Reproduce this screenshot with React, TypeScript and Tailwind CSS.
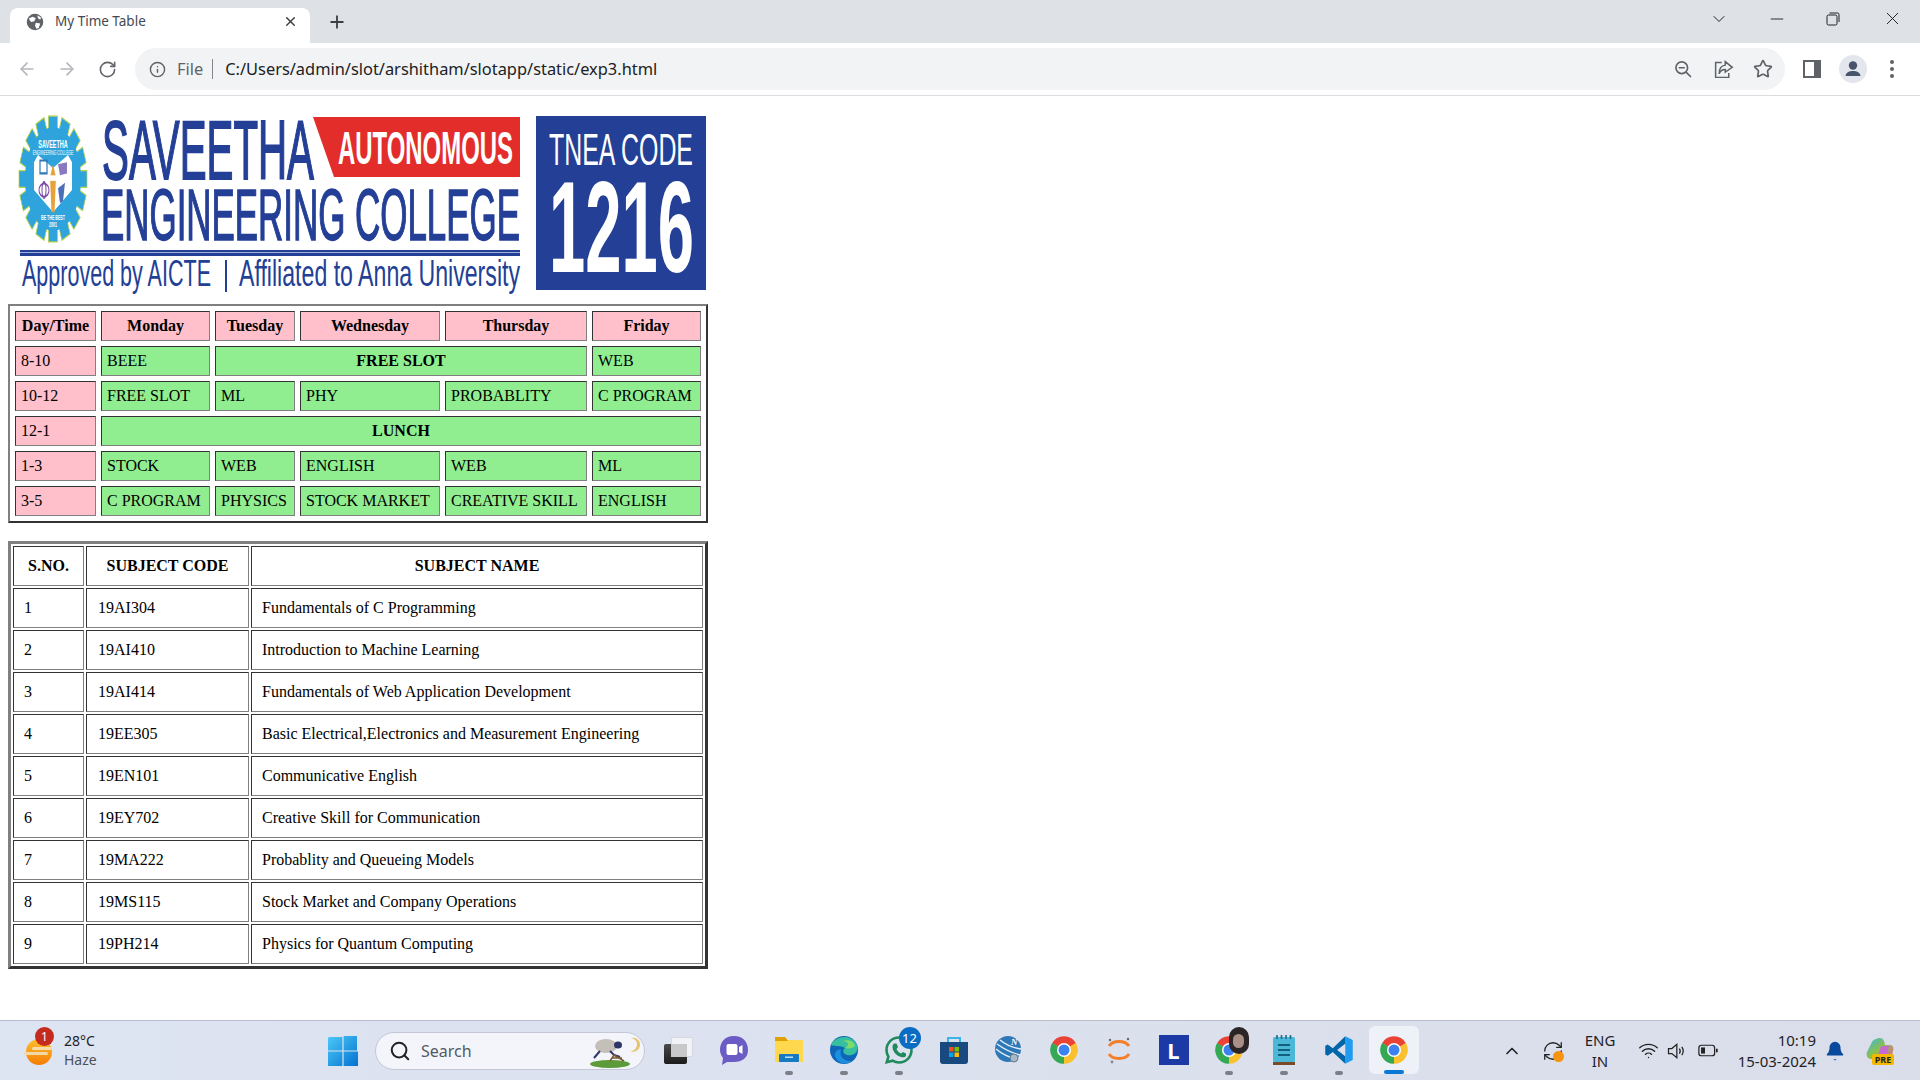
import { ArrowLeft, ArrowRight, RotateCw, Info, Star, X, Plus, ChevronDown, Minus, ChevronUp, Wifi, Search, Bell, RefreshCw } from "lucide-react";

const slotRows = [
  { time: "10-12", cells: ["FREE SLOT", "ML", "PHY", "PROBABLITY", "C PROGRAM"] },
  { time: "1-3", cells: ["STOCK", "WEB", "ENGLISH", "WEB", "ML"] },
  { time: "3-5", cells: ["C PROGRAM", "PHYSICS", "STOCK MARKET", "CREATIVE SKILL", "ENGLISH"] },
];

const subjects = [
  ["1", "19AI304", "Fundamentals of C Programming"],
  ["2", "19AI410", "Introduction to Machine Learning"],
  ["3", "19AI414", "Fundamentals of Web Application Development"],
  ["4", "19EE305", "Basic Electrical,Electronics and Measurement Engineering"],
  ["5", "19EN101", "Communicative English"],
  ["6", "19EY702", "Creative Skill for Communication"],
  ["7", "19MA222", "Probablity and Queueing Models"],
  ["8", "19MS115", "Stock Market and Company Operations"],
  ["9", "19PH214", "Physics for Quantum Computing"],
];

const cellBorder = "border border-t-[#333333] border-l-[#333333] border-r-[#808080] border-b-[#808080]";
const pinkHead = `${cellBorder} bg-[#ffc0cb] h-[30px] p-0 font-bold text-center`;
const pinkCell = `${cellBorder} bg-[#ffc0cb] h-[30px] py-0 pl-[5px] pr-0 font-normal text-left`;
const greenCell = `${cellBorder} bg-[#90ee90] h-[30px] py-0 pl-[5px] pr-0 text-left`;
const greenBold = `${cellBorder} bg-[#90ee90] h-[30px] p-0 font-bold text-center`;

function Logo() {
  const teeth = Array.from({ length: 16 }, (_, i) => i * 22.5);
  const sans = "'Liberation Sans', sans-serif";
  return (
    <svg viewBox="8 112 700 190" className="block w-[700px] h-[190px]">
      <g transform="translate(53 179) scale(1 1.85)">
        {teeth.map((a) => (
          <rect key={a} x="-4.5" y="-34" width="9" height="9" fill="#2ea3dc" stroke="#b7d24e" strokeWidth="0.7" transform={`rotate(${a})`} />
        ))}
        <circle r="28" fill="#2ea3dc" />
        <path d="M-19 -9 L-15 -13 L0 -6 L15 -13 L19 -9 L19 6 L0 18 L-19 6 Z" fill="#ffffff" />
        <path d="M0 -8 L3 -1 L1.5 18 L-1.5 18 L-3 -1 Z" fill="#e8a23a" />
        <rect x="-3" y="-2" width="6" height="3" fill="#ffffff" />
        <path d="M-13 -10 H-6 V-3 H-13 Z" fill="none" stroke="#2f78b8" strokeWidth="1.2" />
        <ellipse cx="-9" cy="6" rx="5" ry="3.5" fill="none" stroke="#7a4aa8" strokeWidth="1" />
        <ellipse cx="-9" cy="6" rx="2" ry="4.5" fill="none" stroke="#7a4aa8" strokeWidth="1" />
        <path d="M5 -8 L14 -9 L14 -3 L7 -2 Z" fill="#8a78c0" />
        <path d="M5 5 L12 2 L10 12 L7 13 Z" fill="#4a6fb8" />
        <text x="0" y="-17" textAnchor="middle" fontSize="5.5" fontWeight="700" fill="#ffffff" fontFamily={sans}>SAVEETHA</text>
        <text x="0" y="-13" textAnchor="middle" fontSize="3.4" fill="#ffffff" fontFamily={sans}>ENGINEERING COLLEGE</text>
        <text x="0" y="22" textAnchor="middle" fontSize="3.6" fontWeight="700" fill="#ffffff" fontFamily={sans}>BE THE BEST</text>
        <text x="0" y="26" textAnchor="middle" fontSize="3.6" fontWeight="700" fill="#ffffff" fontFamily={sans}>2001</text>
      </g>
      <text x="102" y="179" textLength="212" lengthAdjust="spacingAndGlyphs" fontSize="84" fontFamily={sans} fill="#233f96" stroke="#233f96" strokeWidth="1.8">SAVEETHA</text>
      <path d="M313 117 H520 V177 H334 Z" fill="#e32d2a" />
      <text x="338" y="164" textLength="175" lengthAdjust="spacingAndGlyphs" fontSize="46" fontWeight="700" fontFamily={sans} fill="#ffffff">AUTONOMOUS</text>
      <text x="101" y="240" textLength="419" lengthAdjust="spacingAndGlyphs" fontSize="73" fontFamily={sans} fill="#233f96" stroke="#233f96" strokeWidth="1.6">ENGINEERING COLLEGE</text>
      <rect x="20" y="250" width="500" height="6" fill="#233f96" />
      <rect x="20" y="252" width="500" height="1" fill="#9fb0dc" />
      <text x="22" y="286" textLength="189" lengthAdjust="spacingAndGlyphs" fontSize="36" fontFamily={sans} fill="#233f96">Approved by AICTE</text>
      <rect x="225" y="260" width="2" height="32" fill="#233f96" />
      <text x="239" y="286" textLength="281" lengthAdjust="spacingAndGlyphs" fontSize="36" fontFamily={sans} fill="#233f96">Affiliated to Anna University</text>
      <rect x="536" y="116" width="170" height="174" fill="#233f96" />
      <text x="549" y="165" textLength="144" lengthAdjust="spacingAndGlyphs" fontSize="44" fontFamily={sans} fill="#ffffff">TNEA CODE</text>
      <text x="549" y="272" textLength="145" lengthAdjust="spacingAndGlyphs" fontSize="130" fontWeight="700" fontFamily={sans} fill="#ffffff">1216</text>
    </svg>
  );
}

function ChromeIcon({ size = 30 }: { size?: number }) {
  const sector = "M12 12 L2.47 6.5 A11 11 0 0 1 21.53 6.5 Z";
  return (
    <svg viewBox="0 0 24 24" width={size} height={size}>
      <path d={sector} fill="#ea4335" />
      <path d={sector} fill="#fbc02d" transform="rotate(120 12 12)" />
      <path d={sector} fill="#34a853" transform="rotate(240 12 12)" />
      <circle cx="12" cy="12" r="5.6" fill="#ffffff" />
      <circle cx="12" cy="12" r="4.4" fill="#3b82f0" />
    </svg>
  );
}

function TaskCell({ children, dot, active }: { children: React.ReactNode; dot?: boolean; active?: boolean }) {
  return (
    <div className="relative w-[55px] h-[59px] shrink-0 flex items-center justify-center">
      {active && <div className="absolute left-[3px] top-[5px] w-[50px] h-[48px] rounded-md bg-[#eef1f8]" />}
      <div className="relative mb-[1px]">{children}</div>
      {dot && <div className="absolute bottom-[5px] left-[24px] w-[8px] h-[4px] rounded-full bg-[#7b7f88]" />}
      {active && <div className="absolute bottom-[6px] left-[18px] w-[20px] h-[4px] rounded-full bg-[#0b78d4]" />}
    </div>
  );
}

export default function App() {
  return (
    <div className="w-[1920px] h-[1080px] overflow-hidden flex flex-col bg-white font-['Noto_Sans',sans-serif]">
      {/* tab strip */}
      <div className="h-[43px] bg-[#dee1e6] flex items-end pl-[10px] shrink-0">
        <div className="w-[300px] h-[35px] bg-white rounded-t-lg flex items-center pl-[16px] pr-[12px] pb-[8px]">
          <svg viewBox="0 0 24 24" width="18" height="18" className="shrink-0">
            <circle cx="12" cy="12" r="11" fill="#5f6368" />
            <path d="M4 7 L9 5 L13 7 L11 11 L7 12 L5 10 Z M13 13 L19 14 L17 20 L14 21 L12 17 Z M15 3 L20 6 L19 9 L16 7 Z" fill="#ffffff" />
          </svg>
          <span className="ml-[11px] text-[13.5px] text-[#45494f] flex-1">My Time Table</span>
          <X size={15} strokeWidth={2.4} className="text-[#3c4043]" />
        </div>
        <div className="h-[35px] flex items-center ml-[17px] pb-[8px]">
          <Plus size={20} strokeWidth={2.2} className="text-[#3c4043]" />
        </div>
        <div className="ml-auto h-[43px] flex items-center pb-[6px] text-[#202124]">
          <ChevronDown size={20} strokeWidth={1.2} />
          <div className="w-[38px]" />
          <Minus size={20} strokeWidth={1.1} />
          <div className="w-[39px]" />
          <svg viewBox="0 0 14 14" width="14" height="14" fill="none" stroke="#202124" strokeWidth="1">
            <rect x="1" y="3" width="10" height="10" rx="1.5" />
            <path d="M3.5 1 H11.5 A1.5 1.5 0 0 1 13 2.5 V10" />
          </svg>
          <div className="w-[42px]" />
          <X size={21} strokeWidth={1.1} />
          <div className="w-[17px]" />
        </div>
      </div>

      {/* toolbar */}
      <div className="h-[53px] bg-white border-b border-[#dadce0] flex items-center shrink-0">
        <div className="w-[135px] flex items-center pl-[17px] text-[#5f6368] shrink-0">
          <ArrowLeft size={20} className="text-[#b4b7bb]" />
          <ArrowRight size={20} className="ml-[20px] text-[#b4b7bb]" />
          <RotateCw size={19} className="ml-[21px]" />
        </div>
        <div className="w-[1650px] h-[42px] rounded-full bg-[#f1f3f4] flex items-center pl-[14px] pr-[12px] shrink-0">
          <Info size={17} className="text-[#5f6368]" />
          <span className="ml-[11px] text-[16.4px] text-[#5f6368]">File</span>
          <div className="w-px h-[20px] bg-[#80868b] ml-[9px]" />
          <span className="ml-[12px] text-[16.4px] text-[#202124] pt-[1px]">C:/Users/admin/slot/arshitham/slotapp/static/exp3.html</span>
          <div className="ml-auto flex items-center text-[#5f6368]">
            <svg viewBox="0 0 24 24" width="20" height="20" fill="none" stroke="#5f6368" strokeWidth="2" strokeLinecap="round">
              <circle cx="10.5" cy="10.5" r="7" />
              <path d="M7.5 10.5 H13.5 M16 16 L21 21" />
            </svg>
            <svg viewBox="0 0 24 24" width="21" height="21" fill="none" stroke="#5f6368" strokeWidth="1.7" className="ml-[20px]">
              <path d="M10 4 H3 V21 H18 V16" />
              <path d="M14 3 L22 9.5 L14 15 V12 C10 12 8 14 7 17 C7 11 10 7.5 14 7 Z" />
            </svg>
            <Star size={20} strokeWidth={2} className="ml-[19px]" />
          </div>
        </div>
        <div className="flex items-center ml-[18px]">
          <svg viewBox="0 0 18 18" width="18" height="18">
            <path d="M0 0 H18 V18 H0 Z" fill="#5f6368" />
            <rect x="2" y="2" width="9" height="14" fill="#ffffff" />
          </svg>
          <div className="ml-[18px] w-[28px] h-[28px] rounded-full bg-[#e3e6ec] flex items-center justify-center">
            <svg viewBox="0 0 24 24" width="24" height="24" fill="#47546b">
              <circle cx="12" cy="8.5" r="4.2" />
              <path d="M4.5 19 C5 15 8.5 14 12 14 C15.5 14 19 15 19.5 19 Z" />
            </svg>
          </div>
          <div className="ml-[23px] flex flex-col gap-[3px]">
            <div className="w-[4px] h-[4px] rounded-full bg-[#5f6368]" />
            <div className="w-[4px] h-[4px] rounded-full bg-[#5f6368]" />
            <div className="w-[4px] h-[4px] rounded-full bg-[#5f6368]" />
          </div>
        </div>
      </div>

      {/* page */}
      <div className="flex-1 pl-[8px] pt-[16px] font-['Liberation_Serif',serif] text-[16px] text-black">
        <Logo />
        <table className="mt-[2px] w-[700px] table-fixed border-separate border-spacing-[5px] border-2 border-t-[#808080] border-l-[#808080] border-r-[#333333] border-b-[#333333]">
          <thead>
            <tr>
              <th className={`${pinkHead} w-[81px]`}>Day/Time</th>
              <th className={`${pinkHead} w-[109px]`}>Monday</th>
              <th className={`${pinkHead} w-[80px]`}>Tuesday</th>
              <th className={`${pinkHead} w-[140px]`}>Wednesday</th>
              <th className={`${pinkHead} w-[142px]`}>Thursday</th>
              <th className={`${pinkHead}`}>Friday</th>
            </tr>
          </thead>
          <tbody>
            <tr>
              <td className={pinkCell}>8-10</td>
              <td className={greenCell}>BEEE</td>
              <td colSpan={3} className={greenBold}>FREE SLOT</td>
              <td className={greenCell}>WEB</td>
            </tr>
            <tr>
              <td className={pinkCell}>{slotRows[0].time}</td>
              {slotRows[0].cells.map((c, i) => (
                <td key={i} className={greenCell}>{c}</td>
              ))}
            </tr>
            <tr>
              <td className={pinkCell}>12-1</td>
              <td colSpan={5} className={greenBold}>LUNCH</td>
            </tr>
            {slotRows.slice(1).map((r) => (
              <tr key={r.time}>
                <td className={pinkCell}>{r.time}</td>
                {r.cells.map((c, i) => (
                  <td key={i} className={greenCell}>{c}</td>
                ))}
              </tr>
            ))}
          </tbody>
        </table>

        <table className="mt-[18px] w-[700px] table-fixed border-separate border-spacing-[2px] border-3 border-t-[#808080] border-l-[#808080] border-r-[#333333] border-b-[#333333]">
          <thead>
            <tr>
              <th className={`${cellBorder} h-[40px] w-[71px] p-0 font-bold text-center`}>S.NO.</th>
              <th className={`${cellBorder} h-[40px] w-[163px] p-0 font-bold text-center`}>SUBJECT CODE</th>
              <th className={`${cellBorder} h-[40px] p-0 font-bold text-center`}>SUBJECT NAME</th>
            </tr>
          </thead>
          <tbody>
            {subjects.map((s) => (
              <tr key={s[0]}>
                <td className={`${cellBorder} h-[40px] py-0 pl-[10px] pr-0`}>{s[0]}</td>
                <td className={`${cellBorder} h-[40px] py-0 pl-[11px] pr-0`}>{s[1]}</td>
                <td className={`${cellBorder} h-[40px] py-0 pl-[10px] pr-0`}>{s[2]}</td>
              </tr>
            ))}
          </tbody>
        </table>
      </div>

      {/* taskbar */}
      <div className="h-[60px] shrink-0 border-t border-[#b9bccc] bg-gradient-to-r from-[#dde4f2] to-[#dadeea] flex items-center text-[#1f2328]">
        <div className="w-[320px] h-full flex items-center pl-[26px] shrink-0">
          <div className="relative w-[26px] h-[26px] mt-[2px] rounded-full bg-gradient-to-b from-[#fbc02d] to-[#f57c00]">
            <div className="absolute left-[-2px] top-[13px] w-[24px] h-[3px] rounded-full bg-[#f0d9a8]" />
            <div className="absolute left-[6px] top-[8px] w-[20px] h-[3px] rounded-full bg-[#f6dda8]" />
            <div className="absolute left-[9px] top-[-12px] w-[19px] h-[19px] rounded-full bg-[#c42b1c] text-white text-[12px] leading-[19px] text-center">1</div>
          </div>
          <div className="ml-[12px] text-[14px] leading-[19px] mb-[1px]">
            <div>28°C</div>
            <div className="text-[#4c5158]">Haze</div>
          </div>
        </div>
        <div className="w-[46px] h-full flex items-center justify-center shrink-0">
          <svg viewBox="0 0 30 30" width="30" height="30">
            <defs>
              <linearGradient id="win" x1="0" y1="0" x2="1" y2="1">
                <stop offset="0" stopColor="#4cc9f8" />
                <stop offset="1" stopColor="#0472d0" />
              </linearGradient>
            </defs>
            <path d="M1 1 H14.4 V14.4 H0 V2 Z M15.6 0 H29 V14.4 H15.6 Z M0 15.6 H14.4 V30 H0 Z M15.6 15.6 H30 V30 H15.6 Z" fill="url(#win)" />
          </svg>
        </div>
        <div className="ml-[9px] w-[270px] h-[38px] rounded-full bg-[#f3f5fb] border border-[#c3c7d6] flex items-center pl-[13px] shrink-0">
          <Search size={22} strokeWidth={2.2} className="text-[#222]" />
          <span className="ml-[10px] text-[16px] text-[#555a62]">Search</span>
          <svg viewBox="0 0 60 36" width="60" height="36" className="ml-auto mr-[4px]">
            <ellipse cx="30" cy="31" rx="20" ry="4" fill="#5c9a3a" />
            <ellipse cx="26" cy="13" rx="11" ry="7" fill="#c4bfb8" />
            <ellipse cx="38" cy="12" rx="4" ry="3.5" fill="#2f3566" />
            <path d="M20 18 L14 25 M30 18 L34 22 L40 24" stroke="#2f3566" strokeWidth="2" fill="none" />
            <path d="M30 28 L34 22 L44 28 M32 25 H42" stroke="#7a5a30" strokeWidth="1.5" fill="none" />
            <path d="M51 5 A7 7 0 1 1 50 18 A6 6 0 0 0 51 5 Z" fill="#e6c46a" />
          </svg>
        </div>
        <div className="w-[6px] shrink-0" />
        <TaskCell>
          <div className="relative w-[29px] h-[27px]">
            <div className="absolute left-[7px] top-0 w-[22px] h-[20px] rounded-[2px] bg-[#f1f3f8] border border-[#d5d8e2]" />
            <div className="absolute left-0 top-[7px] w-[23px] h-[20px] rounded-[2px] bg-gradient-to-b from-[#4a4a4a] to-[#1c1c1c]" />
            <div className="absolute left-[7px] top-[7px] w-[16px] h-[13px] bg-[#c9c9cc]" />
          </div>
        </TaskCell>
        <TaskCell>
          <svg viewBox="0 0 30 30" width="30" height="30">
            <path d="M15 1 C24 1 29 7 29 15 C29 23 23 27 15 27 H8 L3 30 L4 23 C2 20 1 18 1 15 C1 7 6 1 15 1 Z" fill="#6a5cc4" />
            <rect x="7.5" y="9" width="11" height="11" rx="2" fill="#ffffff" />
            <path d="M20 12 L23.5 10 V19 L20 17 Z" fill="#ffffff" />
          </svg>
        </TaskCell>
        <TaskCell dot>
          <svg viewBox="0 0 30 30" width="30" height="30">
            <path d="M1 2 H11 L14 5 H29 V27 H1 Z" fill="#ffd84d" />
            <path d="M1 2 H11 L14 6 H1 Z" fill="#dfa000" />
            <rect x="5" y="19" width="20" height="8" rx="1" fill="#1579c4" />
            <rect x="11" y="21.5" width="8" height="1.5" fill="#bfe2fb" />
          </svg>
        </TaskCell>
        <TaskCell dot>
          <svg viewBox="0 0 30 30" width="30" height="30">
            <circle cx="15" cy="15" r="14" fill="#0f66b8" />
            <path d="M2 10 C5 2 22 -3 28 10 C30 18 24 21 18 20 C14 19 13 15 16 13 C12 10 5 12 2 10 Z" fill="#37c0a0" />
            <path d="M16 13 C20 14 24 13 26 11 C25 6 19 4 14 6 C20 7 21 10 16 13 Z" fill="#7fdc6a" />
            <path d="M12 15 C10 20 14 27 23 26 C17 31 8 28 6 21 C5 18 9 13 12 15 Z" fill="#1d8fe0" />
          </svg>
        </TaskCell>
        <TaskCell dot>
          <svg viewBox="0 0 30 30" width="30" height="30" fill="none">
            <path d="M15 2.5 C8 2.5 2.5 8 2.5 15 C2.5 17.5 3.2 19.7 4.4 21.6 L2.8 27.2 L8.6 25.7 C10.4 26.8 12.6 27.5 15 27.5 C22 27.5 27.5 22 27.5 15 C27.5 8 22 2.5 15 2.5 Z" stroke="#1f8a5c" strokeWidth="2.6" />
            <path d="M10 8.5 L12.5 8.5 L14 12 L12.5 14 C13.5 16 15 17.5 17 18.5 L19 17 L22 18.5 L22 21 C21 22.5 18 23 14.5 21 C11 19 8.5 15.5 8.5 12 C8.5 10.5 9 9.5 10 8.5 Z" fill="#1f8a5c" />
          </svg>
          <div className="absolute left-[15px] top-[-8px] w-[22px] h-[22px] rounded-full bg-[#0b6cc4] text-white text-[13px] leading-[22px] text-center">12</div>
        </TaskCell>
        <TaskCell>
          <svg viewBox="0 0 30 30" width="30" height="30">
            <path d="M9 8 V3 H21 V8" stroke="#35b5e8" strokeWidth="2" fill="none" />
            <path d="M1 7 H29 V26 A3 3 0 0 1 26 29 H4 A3 3 0 0 1 1 26 Z" fill="#184a80" />
            <rect x="10" y="12" width="4.5" height="4.5" fill="#f25022" />
            <rect x="15.5" y="12" width="4.5" height="4.5" fill="#7fba00" />
            <rect x="10" y="17.5" width="4.5" height="4.5" fill="#00a4ef" />
            <rect x="15.5" y="17.5" width="4.5" height="4.5" fill="#ffb900" />
          </svg>
        </TaskCell>
        <TaskCell>
          <svg viewBox="0 0 30 30" width="30" height="30">
            <circle cx="14" cy="14" r="13" fill="#2f78b8" />
            <path d="M3 9 C10 14 18 18 26 20 M2 14 C8 19 14 22 22 24 M6 5 C12 10 20 13 27 14" stroke="#e2eef8" strokeWidth="1.5" fill="none" />
            <text x="17" y="10" fontSize="9" fontWeight="700" fontStyle="italic" fill="#ffffff" fontFamily="'Liberation Serif', serif">N</text>
            <circle cx="20" cy="23" r="4" fill="#a9b8c4" stroke="#5b7a90" />
          </svg>
        </TaskCell>
        <TaskCell>
          <ChromeIcon />
        </TaskCell>
        <TaskCell>
          <svg viewBox="0 0 30 30" width="30" height="30" fill="none">
            <path d="M5 11 C9 5 21 5 25 11" stroke="#f47f2a" strokeWidth="3" />
            <path d="M5 19 C9 25 21 25 25 19" stroke="#f47f2a" strokeWidth="3" />
            <circle cx="6" cy="5" r="1.2" fill="#666" />
            <circle cx="24" cy="4" r="1.2" fill="#666" />
            <circle cx="8" cy="27" r="1.4" fill="#888" />
          </svg>
        </TaskCell>
        <TaskCell>
          <div className="w-[30px] h-[30px] bg-[#1b3aa5] text-white text-[22px] font-bold leading-[30px] text-center">L</div>
        </TaskCell>
        <TaskCell dot>
          <ChromeIcon />
          <div className="absolute left-[15px] top-[-8px] w-[20px] h-[27px] rounded-full bg-[#2c2525] flex items-center justify-center">
            <div className="w-[11px] h-[14px] rounded-full bg-[#a98f86]" />
          </div>
        </TaskCell>
        <TaskCell dot>
          <svg viewBox="0 0 24 30" width="24" height="30">
            <rect x="1" y="2" width="22" height="25" rx="1.5" fill="#4bb8d8" />
            <rect x="1" y="27" width="22" height="3" fill="#7a4a2a" />
            <path d="M5 0 V4 M9.5 0 V4 M14 0 V4 M18.5 0 V4" stroke="#1e6a8a" strokeWidth="1.6" />
            <path d="M6 10 H18 M6 15 H18 M6 20 H18" stroke="#12607e" strokeWidth="2" />
          </svg>
        </TaskCell>
        <TaskCell dot>
          <svg viewBox="0 0 24 24" width="30" height="30">
            <path d="M17 1 L23 4 V20 L17 23 Z" fill="#1f9cf0" />
            <path d="M17 1 L7 10.5 L3 7.5 L1 8.5 V15.5 L3 16.5 L7 13.5 L17 23 V17 L10.5 12 L17 7 Z" fill="#0065a9" />
          </svg>
        </TaskCell>
        <TaskCell active>
          <ChromeIcon />
        </TaskCell>

        {/* tray */}
        <div className="ml-[75px] w-[32px] flex justify-center shrink-0">
          <ChevronUp size={20} strokeWidth={2} className="text-[#222]" />
        </div>
        <div className="w-[50px] flex justify-center shrink-0">
          <div className="relative">
            <RefreshCw size={22} strokeWidth={1.4} className="text-[#222]" />
            <div className="absolute left-[11px] top-[11px] w-[11px] h-[11px] rounded-full bg-[#f7930e]" />
          </div>
        </div>
        <div className="w-[44px] text-center text-[15px] leading-[21px] shrink-0">
          <div>ENG</div>
          <div>IN</div>
        </div>
        <div className="ml-[12px] w-[28px] flex justify-center shrink-0">
          <Wifi size={21} strokeWidth={1.6} className="text-[#222]" />
        </div>
        <div className="w-[28px] flex justify-center shrink-0">
          <svg viewBox="0 0 24 24" width="20" height="20" fill="none" stroke="#222" strokeWidth="1.5">
            <path d="M3 9 H7 L13 4 V20 L7 15 H3 Z" />
            <path d="M16 9 C17.5 11 17.5 13 16 15 M19 7 C21 10 21 14 19 17" />
          </svg>
        </div>
        <div className="w-[36px] flex justify-center shrink-0">
          <svg viewBox="0 0 24 14" width="21" height="13" fill="none">
            <rect x="1" y="1" width="18" height="12" rx="3" stroke="#222" strokeWidth="1.4" />
            <rect x="3.5" y="3.5" width="4.5" height="7" fill="#222" />
            <path d="M20.5 5 H22.5 V9 H20.5 Z" fill="#222" />
          </svg>
        </div>
        <div className="w-[90px] text-right text-[15px] leading-[21px] shrink-0">
          <div>10:19</div>
          <div>15-03-2024</div>
        </div>
        <div className="w-[38px] flex justify-center shrink-0">
          <Bell size={22} fill="#0a4a9c" strokeWidth={0} />
        </div>
        <div className="w-[52px] flex justify-center shrink-0">
          <div className="relative w-[28px] h-[28px]">
            <svg viewBox="0 0 28 28" width="28" height="28">
              <defs>
                <linearGradient id="cop" x1="0" y1="0" x2="1" y2="1">
                  <stop offset="0" stopColor="#35b6e8" />
                  <stop offset="0.5" stopColor="#8cc04a" />
                  <stop offset="1" stopColor="#e85ca8" />
                </linearGradient>
              </defs>
              <path d="M10 2 C14 0 17 1 18 4 L19 8 H24 C27 8 28 11 27 14 L25 22 H5 C1 22 0 18 1 15 L6 5 C7 3 8 3 10 2 Z" fill="url(#cop)" />
              <path d="M15 9 H23 L20 20 H12 Z" fill="#c56ad0" />
            </svg>
            <div className="absolute left-[6px] top-[17px] w-[22px] h-[11px] rounded-[2px] bg-[#f5b800] text-[#222] text-[9px] leading-[11px] font-bold text-center">PRE</div>
          </div>
        </div>
      </div>
    </div>
  );
}
